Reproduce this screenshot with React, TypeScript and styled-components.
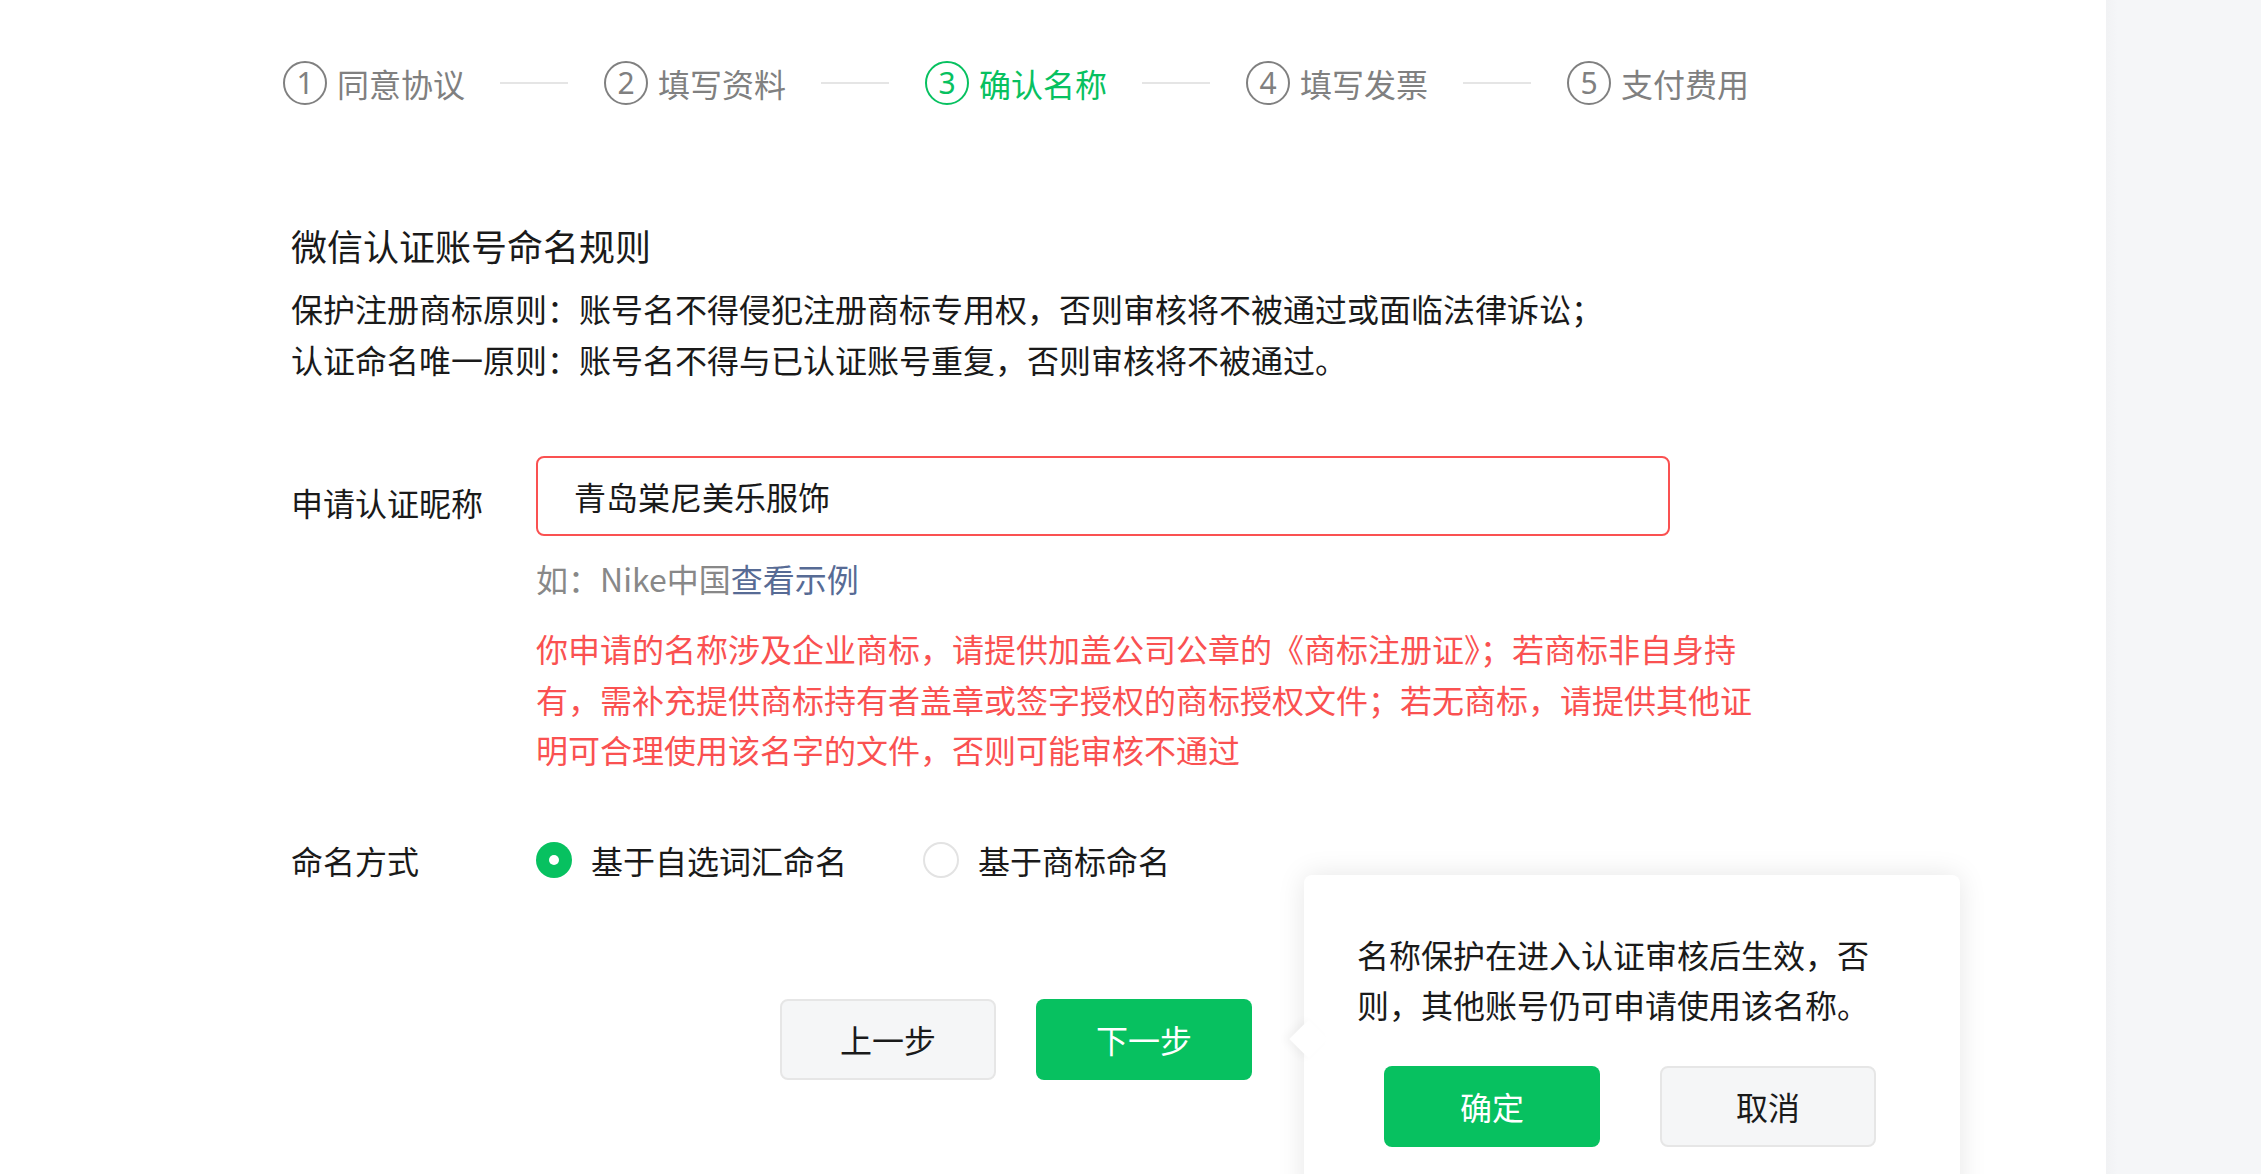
import React from 'react';
import styled, { createGlobalStyle, css } from 'styled-components';

const GlobalStyle = createGlobalStyle`
  html, body {
    margin: 0;
    padding: 0;
    background: #fff;
  }
  body {
    font-family: "Noto Sans CJK SC", "Noto Sans", "Liberation Sans", sans-serif;
    color: #1a1a1a;
  }
`;

const Page = styled.div`
  display: flex;
  width: 2261px;
  height: 1174px;
  overflow: hidden;
`;

const Main = styled.main`
  flex: 1;
  background: #fff;
  padding: 61px 0 0 283px;
  box-sizing: border-box;
`;

const Side = styled.aside`
  width: 155px;
  background: linear-gradient(90deg, #f1f2f4 0, #f5f6f8 12px, #f5f6f8 100%);
`;

const Steps = styled.ol`
  display: flex;
  align-items: center;
  list-style: none;
  margin: 0;
  padding: 0;
  height: 44px;
`;

const Step = styled.li<{ $active?: boolean }>`
  display: flex;
  align-items: center;
  gap: 10px;
  font-size: 32px;
  line-height: 44px;
  color: #808080;
  ${(p) => p.$active && css`color: #07c160;`}
`;

const StepNum = styled.span<{ $active?: boolean }>`
  display: flex;
  align-items: center;
  justify-content: center;
  width: 44px;
  height: 44px;
  box-sizing: border-box;
  border: 2px solid ${(p) => (p.$active ? '#07c160' : '#808080')};
  border-radius: 50%;
  font-family: "Noto Sans", "Liberation Sans", sans-serif;
  font-size: 30px;
  font-weight: 400;
  line-height: 1;
`;

const StepLine = styled.li`
  width: 68px;
  height: 2px;
  margin: 0 36px 0 35px;
  background: #e5e5e5;
`;

const Body = styled.div`
  width: 1458px;
  padding-left: 8px;
  box-sizing: border-box;
`;

const Title = styled.h2`
  margin: 115px 0 0;
  font-size: 36px;
  line-height: 50px;
  font-weight: 400;
  color: #1a1a1a;
`;

const Rules = styled.div`
  margin-top: 13px;
  font-size: 32px;
  line-height: 51px;
  color: #1a1a1a;
`;

const FormRow = styled.div<{ $gap: number }>`
  display: flex;
  align-items: flex-start;
  margin-top: ${(p) => p.$gap}px;
`;

const Label = styled.label<{ $pad?: number }>`
  flex: 0 0 245px;
  padding-top: ${(p) => p.$pad || 0}px;
  font-size: 32px;
  line-height: 50px;
  color: #1a1a1a;
`;

const Field = styled.div`
  flex: 1;
`;

const Input = styled.input`
  display: block;
  width: 1134px;
  height: 80px;
  box-sizing: border-box;
  padding: 0 36px;
  border: 2px solid #fa5151;
  border-radius: 8px;
  outline: none;
  font-family: inherit;
  font-size: 32px;
  color: #1a1a1a;
  background: #fff;
`;

const Hint = styled.div`
  margin-top: 17px;
  font-size: 32px;
  line-height: 50px;
  color: #888;
`;

const Link = styled.a`
  color: #576b95;
  text-decoration: none;
`;

const ErrorText = styled.div`
  margin-top: 20px;
  width: 1216px;
  font-size: 32px;
  line-height: 50.5px;
  color: #fa5151;
`;

const Options = styled.div`
  display: flex;
  align-items: center;
  gap: 76px;
  height: 50px;
`;

const Option = styled.label`
  display: flex;
  align-items: center;
  gap: 19px;
  font-size: 32px;
  line-height: 50px;
  color: #1a1a1a;
`;

const Radio = styled.span<{ $checked?: boolean }>`
  position: relative;
  width: 36px;
  height: 36px;
  box-sizing: border-box;
  border-radius: 50%;
  ${(p) =>
    p.$checked
      ? css`
          background: #07c160;
          &::after {
            content: '';
            position: absolute;
            left: 13px;
            top: 13px;
            width: 10px;
            height: 10px;
            border-radius: 50%;
            background: #fff;
          }
        `
      : css`
          border: 2px solid #e3e3e3;
          background: #fff;
        `}
`;

const Actions = styled.div`
  display: flex;
  justify-content: center;
  gap: 40px;
  margin-top: 114px;
`;

const Anchor = styled.div`
  position: relative;
`;

const Button = styled.button<{ $primary?: boolean }>`
  width: 216px;
  height: 81px;
  border-radius: 8px;
  font-family: inherit;
  font-size: 32px;
  cursor: pointer;
  ${(p) =>
    p.$primary
      ? css`
          border: none;
          background: #07c160;
          color: #fff;
        `
      : css`
          border: 2px solid #e6e6e6;
          background: #f5f6f7;
          color: #1a1a1a;
        `}
`;

const Popover = styled.div`
  position: absolute;
  left: calc(100% + 52px);
  top: -124px;
  width: 656px;
  padding: 54px 0 57px 53px;
  box-sizing: border-box;
  background: #fff;
  border-radius: 8px;
  box-shadow: 0 0 28px rgba(0, 0, 0, 0.1);

  &::before {
    content: '';
    position: absolute;
    left: -9px;
    top: 150px;
    width: 28px;
    height: 28px;
    background: #fff;
    transform: rotate(45deg);
    box-shadow: -4px 4px 8px rgba(0, 0, 0, 0.04);
  }
`;

const PopText = styled.p`
  position: relative;
  margin: 0;
  width: 520px;
  font-size: 32px;
  line-height: 50px;
  color: #1a1a1a;
`;

const PopActions = styled.div`
  display: flex;
  gap: 60px;
  margin: 37px 0 0 27px;
`;

const steps = ['同意协议', '填写资料', '确认名称', '填写发票', '支付费用'];

export default function App() {
  return (
    <>
      <GlobalStyle />
      <Page>
        <Main>
          <Steps>
            {steps.map((s, i) => (
              <React.Fragment key={s}>
                {i > 0 && <StepLine />}
                <Step $active={i === 2}>
                  <StepNum $active={i === 2}>{i + 1}</StepNum>
                  {s}
                </Step>
              </React.Fragment>
            ))}
          </Steps>

          <Body>
            <Title>微信认证账号命名规则</Title>
            <Rules>
              保护注册商标原则：账号名不得侵犯注册商标专用权，否则审核将不被通过或面临法律诉讼；
              <br />
              认证命名唯一原则：账号名不得与已认证账号重复，否则审核将不被通过。
            </Rules>

            <FormRow $gap={71}>
              <Label $pad={21}>申请认证昵称</Label>
              <Field>
                <Input defaultValue="青岛棠尼美乐服饰" />
                <Hint>
                  如：Nike中国<Link href="#">查看示例</Link>
                </Hint>
                <ErrorText>
                  你申请的名称涉及企业商标，请提供加盖公司公章的《商标注册证》；若商标非自身持有，需补充提供商标持有者盖章或签字授权的商标授权文件；若无商标，请提供其他证明可合理使用该名字的文件，否则可能审核不通过
                </ErrorText>
              </Field>
            </FormRow>

            <FormRow $gap={60}>
              <Label>命名方式</Label>
              <Options>
                <Option>
                  <Radio $checked />
                  基于自选词汇命名
                </Option>
                <Option>
                  <Radio />
                  基于商标命名
                </Option>
              </Options>
            </FormRow>

            <Actions>
              <Button>上一步</Button>
              <Anchor>
                <Button $primary>下一步</Button>
                <Popover>
                  <PopText>名称保护在进入认证审核后生效，否则，其他账号仍可申请使用该名称。</PopText>
                  <PopActions>
                    <Button $primary>确定</Button>
                    <Button>取消</Button>
                  </PopActions>
                </Popover>
              </Anchor>
            </Actions>
          </Body>
        </Main>
        <Side />
      </Page>
    </>
  );
}
